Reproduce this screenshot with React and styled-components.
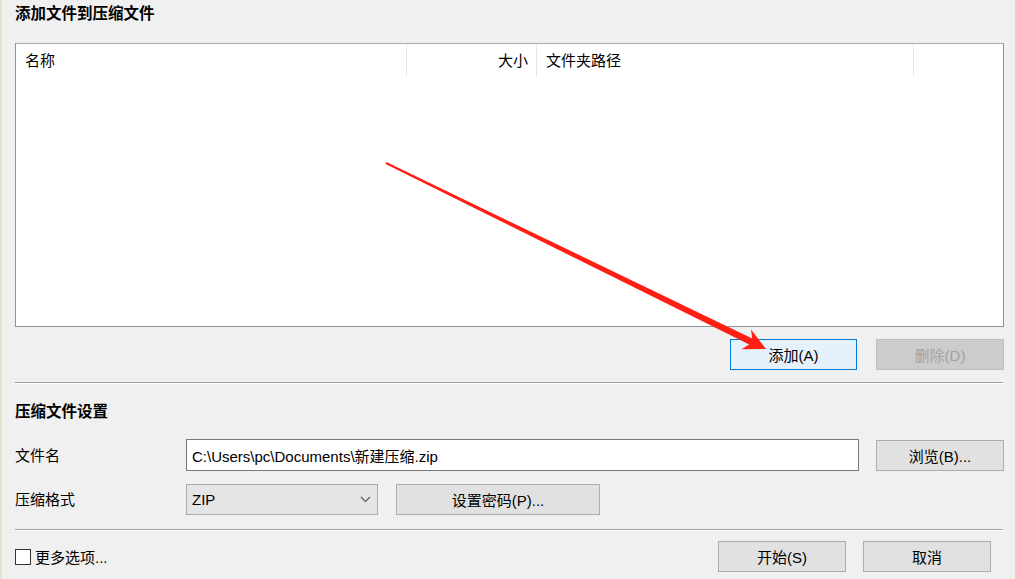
import React from "react";
import styled, { createGlobalStyle } from "styled-components";

const Global = createGlobalStyle`
  html, body { margin: 0; padding: 0; background: #f0f0f0; }
  body { font-family: "Liberation Sans", "Noto Sans CJK SC", sans-serif; }
`;

const Dialog = styled.div`
  position: relative;
  width: 1015px;
  height: 579px;
  box-sizing: border-box;
  background: #f0f0f0;
  border-left: 2px solid #dde6cf;
  padding: 0 11px 0 13px;
  display: flex;
  flex-direction: column;
  font-size: 15px;
  color: #000;
  overflow: hidden;
`;

const SectionTitle = styled.div`
  font-weight: bold;
  font-size: 15.5px;
  height: 20px;
  line-height: 20px;
  margin-top: ${(p) => p.$top}px;
`;

const ListBox = styled.div`
  margin-top: 19px;
  height: 284px;
  box-sizing: border-box;
  background: #fff;
  border: 1px solid #8f9296;
  border-top-color: #a8abaf;
`;

const HeaderRow = styled.div`
  display: grid;
  grid-template-columns: 391px 130px 377px 1fr;
  height: 33px;
`;

const HeaderCell = styled.div`
  display: flex;
  align-items: center;
  justify-content: ${(p) => (p.$right ? "flex-end" : "flex-start")};
  padding: ${(p) => (p.$right ? "0 8px 0 0" : "0 0 0 9px")};
  border-right: ${(p) => (p.$last ? "none" : "1px solid #e8e8e8")};
  line-height: 1;
`;

const Row = styled.div`
  display: flex;
  align-items: center;
  justify-content: ${(p) => p.$justify || "flex-start"};
  margin-top: ${(p) => p.$top || 0}px;
  gap: ${(p) => p.$gap || 0}px;
  padding-right: ${(p) => p.$pr || 0}px;
`;

const Button = styled.button`
  width: ${(p) => p.$w}px;
  height: 31px;
  box-sizing: border-box;
  font-family: inherit;
  font-size: 15px;
  padding: 0;
  background: #e1e1e1;
  border: 1px solid #adadad;
  color: #000;
  display: flex;
  align-items: center;
  justify-content: center;
  cursor: default;
  &[data-focus="true"] {
    background: #e5f1fb;
    border-color: #0078d7;
  }
  &:disabled {
    background: #cccccc;
    border-color: #bfbfbf;
    color: #a2a2a2;
  }
`;

const Separator = styled.div`
  height: 0;
  border-top: 1px solid #a0a0a0;
  border-bottom: 1px solid #ffffff;
  margin-top: ${(p) => p.$top}px;
  margin-right: 1px;
`;

const FieldGrid = styled.div`
  display: grid;
  grid-template-columns: 171px auto;
  row-gap: 13px;
  margin-top: 17px;
  align-items: center;
`;

const Label = styled.div`
  line-height: 1;
`;

const TextInput = styled.div`
  width: 673px;
  height: 32px;
  box-sizing: border-box;
  background: #fff;
  border: 1px solid #7a7a7a;
  display: flex;
  align-items: center;
  padding-left: 5px;
  font-size: 15px;
`;

const Select = styled.div`
  width: 192px;
  height: 31px;
  box-sizing: border-box;
  background: #e5e5e5;
  border: 1px solid #adadad;
  display: flex;
  align-items: center;
  justify-content: space-between;
  padding: 0 6px 0 5px;
`;

const Checkbox = styled.span`
  width: 16px;
  height: 16px;
  box-sizing: border-box;
  border: 1px solid #333;
  background: #fff;
  display: inline-block;
`;

const CheckLabel = styled.label`
  display: flex;
  align-items: center;
  gap: 4px;
`;

const Spacer = styled.div`
  flex: 1;
`;

const ArrowLayer = styled.svg`
  position: absolute;
  left: -2px;
  top: 0;
  pointer-events: none;
`;

export default function App() {
  return (
    <>
      <Global />
      <Dialog>
        <SectionTitle $top={4}>添加文件到压缩文件</SectionTitle>
        <ListBox>
          <HeaderRow>
            <HeaderCell>名称</HeaderCell>
            <HeaderCell $right>大小</HeaderCell>
            <HeaderCell>文件夹路径</HeaderCell>
            <HeaderCell $last />
          </HeaderRow>
        </ListBox>
        <Row $justify="flex-end" $top={12} $gap={19}>
          <Button $w={127} data-focus="true">添加(A)</Button>
          <Button $w={128} disabled>删除(D)</Button>
        </Row>
        <Separator $top={12} />
        <SectionTitle $top={18}>压缩文件设置</SectionTitle>
        <FieldGrid>
          <Label>文件名</Label>
          <Row $gap={17}>
            <TextInput>C:\Users\pc\Documents\新建压缩.zip</TextInput>
            <Button $w={128}>浏览(B)...</Button>
          </Row>
          <Label>压缩格式</Label>
          <Row $gap={18}>
            <Select>
              <span>ZIP</span>
              <svg width="11" height="7" viewBox="0 0 11 7">
                <path d="M1 1 L5.5 5.5 L10 1" fill="none" stroke="#555" strokeWidth="1.1" />
              </svg>
            </Select>
            <Button $w={204}>设置密码(P)...</Button>
          </Row>
        </FieldGrid>
        <Separator $top={14} />
        <Row $top={10} $gap={17} $pr={13}>
          <CheckLabel>
            <Checkbox />
            更多选项...
          </CheckLabel>
          <Spacer />
          <Button $w={128}>开始(S)</Button>
          <Button $w={128}>取消</Button>
        </Row>
        <ArrowLayer width="1015" height="579" viewBox="0 0 1015 579">
          <polygon
            points="386.4,162.1 752.2,338.4 751,329.4 766,349 741.4,349.2 749.2,344.6 385.6,163.9"
            fill="#ff1f14"
          />
        </ArrowLayer>
      </Dialog>
    </>
  );
}
